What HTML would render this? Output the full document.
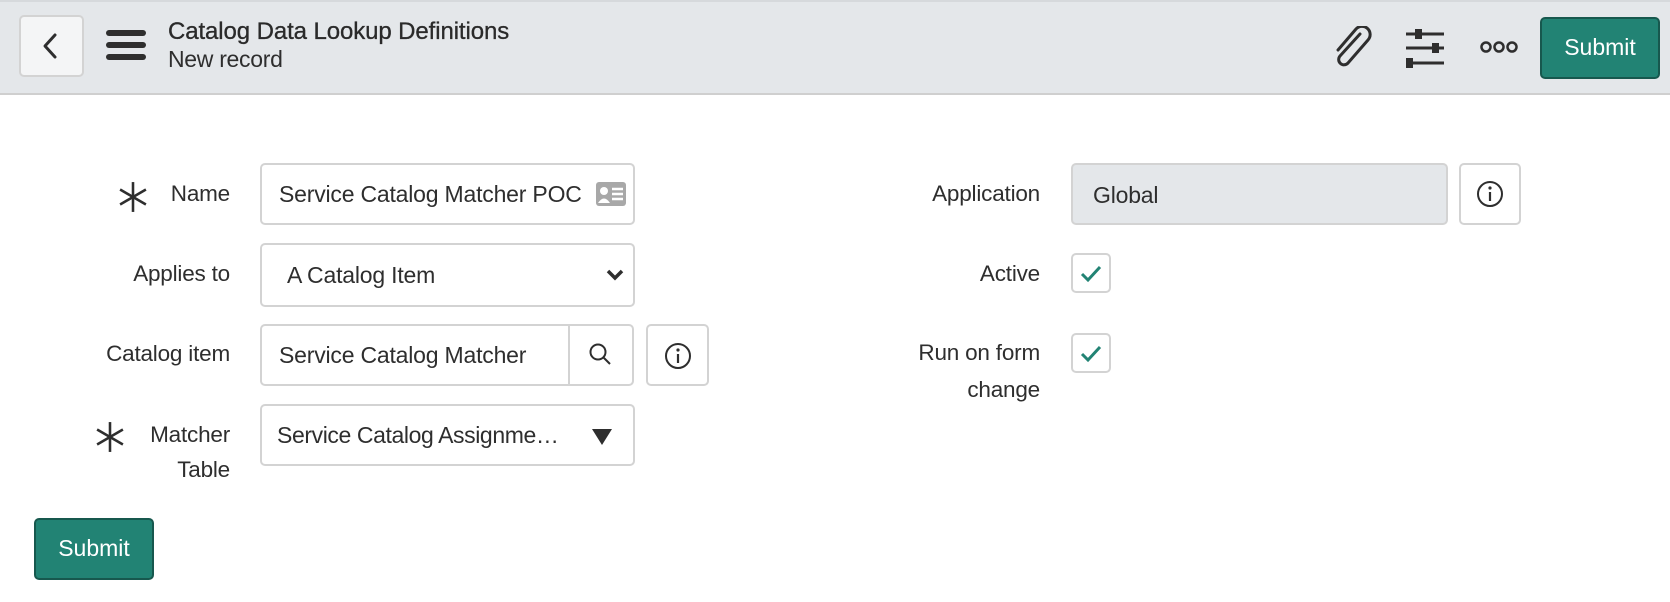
<!DOCTYPE html>
<html><head><meta charset="utf-8"><style>
*{box-sizing:border-box;margin:0;padding:0}
body{width:1670px;height:602px;background:#fff;font-family:"Liberation Sans",sans-serif;color:#2e2e2e;position:relative;overflow:hidden}
.a{position:absolute}
.hdr{left:0;top:0;width:1670px;height:95px;background:#e4e7ea;border-top:2px solid #d6d9dc;border-bottom:2px solid #cfcfcf}
.box{position:absolute;border:2px solid #d3d3d3;border-radius:5px;background:#fff}
.lbl{position:absolute;font-size:22.5px;text-align:right;color:#2e2e2e;line-height:36px;letter-spacing:-0.2px}
.val{position:absolute;font-size:23px;color:#2e2e2e;line-height:28px;white-space:nowrap;letter-spacing:-0.2px}
.btn{position:absolute;background:#228374;border:2px solid #17584e;border-radius:5px;color:#fff;font-size:23px;text-align:center}
.chk{position:absolute;width:40px;height:40px;border:2px solid #d3d3d3;border-radius:5px;background:#fff}
.ast{position:absolute;width:32px;height:32px}
</style></head><body>
<div class="a hdr"></div>
<div class="box" style="left:19px;top:15px;width:65px;height:62px;background:#f4f5f6">
<svg width="61" height="58" viewBox="0 0 61 58"><path d="M34 18 L24 29 L34 40" fill="none" stroke="#2e2e2e" stroke-width="3" stroke-linecap="round" stroke-linejoin="round"/></svg></div>
<svg class="a" style="left:105px;top:29px" width="42" height="34"><g stroke="#2e2e2e" stroke-width="6" stroke-linecap="round"><line x1="4" y1="4" x2="38" y2="4"/><line x1="4" y1="16" x2="38" y2="16"/><line x1="4" y1="28" x2="38" y2="28"/></g></svg>
<div class="val" style="left:168px;top:18px;font-size:24px;letter-spacing:-0.1px;color:#2a2a2a;-webkit-text-stroke:0.3px #2a2a2a">Catalog Data Lookup Definitions</div>
<div class="val" style="left:168px;top:45px;font-size:23px;letter-spacing:-0.3px">New record</div>
<svg class="a" style="left:1328px;top:26px" width="48" height="44" viewBox="0 0 48 44"><path d="M30 8 L10 30 a5 5 0 0 0 8 7 L38 14 a8 8 0 0 0 -12 -11 L8 24" fill="none" stroke="#2e2e2e" stroke-width="3" stroke-linecap="round" transform="translate(2,0)"/></svg>
<svg class="a" style="left:1402px;top:26px" width="46" height="44"><g stroke="#2e2e2e" stroke-width="3"><line x1="4" y1="8" x2="42" y2="8"/><line x1="4" y1="22" x2="42" y2="22"/><line x1="4" y1="37" x2="42" y2="37"/></g><g fill="#2e2e2e"><rect x="13" y="3" width="7" height="10"/><rect x="30" y="17" width="7" height="10"/><rect x="4" y="32" width="7" height="10"/></g></svg>
<svg class="a" style="left:1478px;top:39px" width="44" height="16"><g fill="none" stroke="#2e2e2e" stroke-width="2.5"><circle cx="8" cy="8" r="4.5"/><circle cx="21" cy="8" r="4.5"/><circle cx="34" cy="8" r="4.5"/></g></svg>
<div class="btn" style="left:1540px;top:17px;width:120px;height:62px;line-height:57px">Submit</div>

<svg class="ast" style="left:117px;top:181px" viewBox="0 0 30 30"><g stroke="#2e2e2e" stroke-width="2.4"><line x1="15" y1="1" x2="15" y2="29"/><line x1="2.9" y1="8" x2="27.1" y2="22"/><line x1="2.9" y1="22" x2="27.1" y2="8"/></g></svg>
<div class="lbl" style="left:150px;top:176px;width:80px">Name</div>
<div class="box" style="left:260px;top:163px;width:375px;height:62px"></div>
<div class="val" style="left:279px;top:180px">Service Catalog Matcher POC</div>
<svg class="a" style="left:596px;top:182px" width="30" height="24"><rect x="0" y="0" width="30" height="24" rx="3" fill="#a8a8a8"/><circle cx="8" cy="9" r="4" fill="#fff"/><path d="M2 21 q6 -9 12 0z" fill="#fff"/><g stroke="#fff" stroke-width="2.5"><line x1="16" y1="7" x2="27" y2="7"/><line x1="16" y1="12" x2="27" y2="12"/><line x1="16" y1="17" x2="27" y2="17"/></g></svg>

<div class="lbl" style="left:40px;top:256px;width:190px">Applies to</div>
<div class="box" style="left:260px;top:243px;width:375px;height:64px"></div>
<div class="val" style="left:287px;top:261px">A Catalog Item</div>
<svg class="a" style="left:606px;top:268px" width="18" height="14"><path d="M2 3 L9 10 L16 3" fill="none" stroke="#2e2e2e" stroke-width="3.5"/></svg>

<div class="lbl" style="left:40px;top:336px;width:190px">Catalog item</div>
<div class="box" style="left:260px;top:324px;width:374px;height:62px"></div>
<div class="a" style="left:568px;top:325px;width:2px;height:60px;background:#d3d3d3"></div>
<div class="val" style="left:279px;top:341px">Service Catalog Matcher</div>
<svg class="a" style="left:587px;top:341px" width="28" height="28"><circle cx="11" cy="11" r="7.5" fill="none" stroke="#2e2e2e" stroke-width="2"/><line x1="16.5" y1="16.5" x2="23" y2="23" stroke="#2e2e2e" stroke-width="2"/></svg>
<div class="box" style="left:646px;top:324px;width:63px;height:62px"></div>
<svg class="a" style="left:663px;top:341px" width="30" height="30"><circle cx="15" cy="15" r="12" fill="none" stroke="#2e2e2e" stroke-width="2"/><circle cx="15" cy="9" r="1.6" fill="#2e2e2e"/><line x1="15" y1="13" x2="15" y2="22" stroke="#2e2e2e" stroke-width="2.2"/></svg>

<svg class="ast" style="left:94px;top:421px" viewBox="0 0 30 30"><g stroke="#2e2e2e" stroke-width="2.4"><line x1="15" y1="1" x2="15" y2="29"/><line x1="2.9" y1="8" x2="27.1" y2="22"/><line x1="2.9" y1="22" x2="27.1" y2="8"/></g></svg>
<div class="lbl" style="left:120px;top:417px;width:110px">Matcher</div>
<div class="lbl" style="left:120px;top:452px;width:110px">Table</div>
<div class="box" style="left:260px;top:404px;width:375px;height:62px"></div>
<div class="val" style="left:277px;top:421px;letter-spacing:-0.4px">Service Catalog Assignme…</div>
<svg class="a" style="left:591px;top:428px" width="22" height="18"><path d="M1 1 L21 1 L11 17z" fill="#2e2e2e"/></svg>

<div class="btn" style="left:34px;top:518px;width:120px;height:62px;line-height:57px">Submit</div>

<div class="lbl" style="left:840px;top:176px;width:200px">Application</div>
<div class="box" style="left:1071px;top:163px;width:377px;height:62px;background:#e4e7ea"></div>
<div class="val" style="left:1093px;top:181px">Global</div>
<div class="box" style="left:1459px;top:163px;width:62px;height:62px"></div>
<svg class="a" style="left:1475px;top:179px" width="30" height="30"><circle cx="15" cy="15" r="12" fill="none" stroke="#2e2e2e" stroke-width="2"/><circle cx="15" cy="9" r="1.6" fill="#2e2e2e"/><line x1="15" y1="13" x2="15" y2="22" stroke="#2e2e2e" stroke-width="2.2"/></svg>

<div class="lbl" style="left:840px;top:256px;width:200px">Active</div>
<div class="chk" style="left:1071px;top:253px"></div>
<svg class="a" style="left:1071px;top:253px" width="40" height="40"><path d="M11 21 L17 27 L29 14" fill="none" stroke="#228374" stroke-width="3"/></svg>
<div class="lbl" style="left:840px;top:335px;width:200px">Run on form</div>
<div class="lbl" style="left:840px;top:372px;width:200px">change</div>
<div class="chk" style="left:1071px;top:333px"></div>
<svg class="a" style="left:1071px;top:333px" width="40" height="40"><path d="M11 21 L17 27 L29 14" fill="none" stroke="#228374" stroke-width="3"/></svg>
</body></html>
